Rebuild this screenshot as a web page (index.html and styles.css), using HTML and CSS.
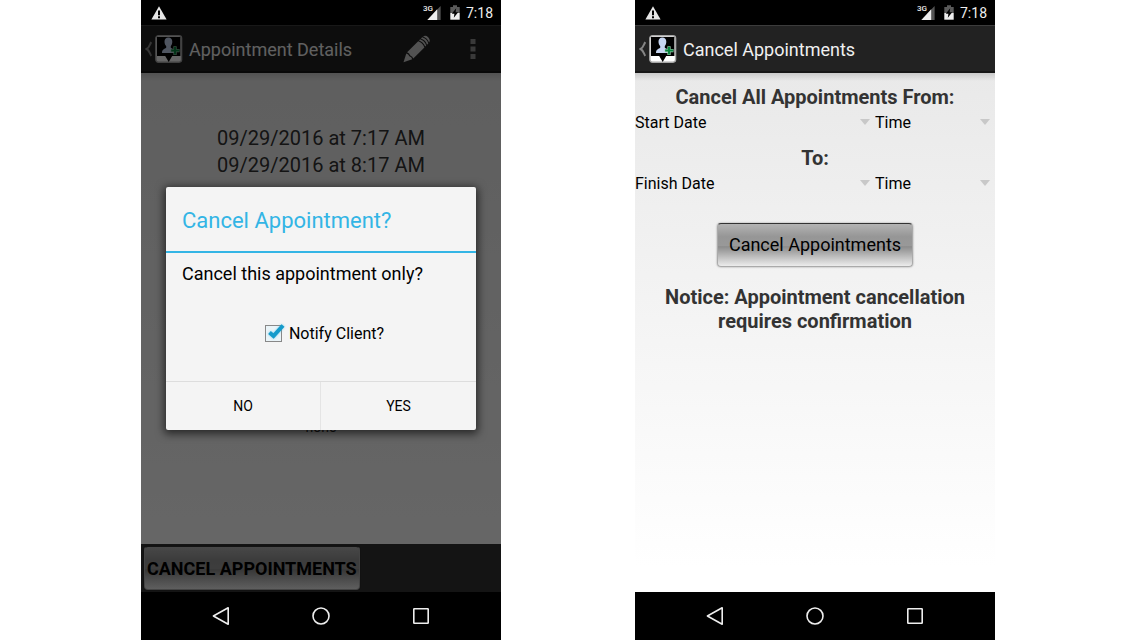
FILE: index.html
```html
<!DOCTYPE html>
<html lang="en">
<head>
<meta charset="utf-8">
<title>Appointments</title>
<link rel="stylesheet" href="styles.css">
</head>
<body>
<svg class="defs" aria-hidden="true">
  <symbol id="warning" viewBox="0 0 16 14">
    <path fill="#e6e6e6" d="M8 0.3 15.6 13.6H0.4Z"/>
    <path fill="#000" d="M7 4.6h2v4.6H7zM7 10.2h2v2H7z"/>
  </symbol>
  <symbol id="signal" viewBox="0 0 14 15">
    <path fill="#555" d="M13.6 1v14H0.4Z"/>
    <path fill="#eee" d="M10.2 4.200V15H0.4Z"/>
  </symbol>
  <symbol id="battery" viewBox="0 0 10 15">
    <path fill="#5a5a5a" d="M0.3 2H3V0.3H7V2h2.7v6H0.3z"/>
    <path fill="#eee" d="M0.3 8h9.4v6.7H0.3z"/>
    <path fill="#000" d="M6.2 3.2 1.8 8.8h2.6L3.8 12.8 8.2 7.2H5.6z"/>
  </symbol>
  <symbol id="chevron" viewBox="0 0 8 16">
    <path fill="none" stroke="#858585" stroke-width="2" d="M6.3 1.2C4.7 3.4 4.6 6.4 1.6 8c3 1.6 3.1 4.6 4.7 6.8"/>
  </symbol>
  <symbol id="app" viewBox="0 0 28 28">
    <rect x="0.8" y="0.8" width="25.8" height="26.4" rx="2.6" fill="#fff" stroke="#a6a6a6" stroke-width="1.4"/>
    <path fill="#000" d="M2 2h23.4v19h-8.2L13.7 27 10.2 21H2z"/>
    <path fill="#c6d5f1" d="M13.3 2.6c2.6 0 4 1.8 4 4.2 0 2-.7 3.2-1.5 4.2v1.8c1.6 1.3 4.6 1.6 4.6 5.2H7c0-3.6 2.5-3.9 4.2-5.2V11C10.2 10 9.5 8.7 9.5 6.8c0-2.4 1.3-4.2 3.8-4.2z"/>
    <path stroke="#9ccfae" stroke-width="3.2" d="M15.7 15.6h8.8M20 11.200v8.800"/>
    <path stroke="#07823d" stroke-width="2" d="M16.2 15.6h7.800M20 11.700v7.800"/>
  </symbol>
  <symbol id="pencil" viewBox="0 0 28 28">
    <g fill="#ccc">
      <path d="M0.500 27.300 3.300 18.600Q5.500 19 6.400 21.300 8.600 22 9.200 24.300Z"/>
      <path d="M4.100 17.200 15.200 6.200Q19.600 7.800 21.400 12.400L10.300 23.400Q9.600 21.200 7.300 20.400 6.400 17.900 4.100 17.200Z"/>
      <path d="M16 5.400 17.100 4.300Q21.600 5.600 23.200 10.500L22.200 11.600Q20.400 7 16 5.400Z"/>
      <path d="M17.900 3.500 19.200 2.200Q24 3.700 25.300 8.400L24 9.700Q22.500 5 17.900 3.500Z"/>
      <path d="M20 1.500Q22.600-.1 25.200 2.300 27.700 5 26.100 7.600 24.400 3 20 1.500Z"/>
    </g>
  </symbol>
  <symbol id="more" viewBox="0 0 6 22">
    <path fill="#909090" d="M.5 1h5v5h-5zM.5 8.500h5v5h-5zM.5 16h5v5h-5z"/>
  </symbol>
  <symbol id="back" viewBox="0 0 20 20">
    <path fill="none" stroke="#eee" stroke-width="1.600" stroke-linejoin="round" d="M17.200 1.800v16.400L2.400 10z"/>
  </symbol>
  <symbol id="home" viewBox="0 0 20 20">
    <circle cx="10" cy="10" r="8" fill="none" stroke="#eee" stroke-width="1.600"/>
  </symbol>
  <symbol id="recent" viewBox="0 0 20 20">
    <rect x="2.800" y="2.800" width="14.400" height="14.400" rx=".5" fill="none" stroke="#eee" stroke-width="1.600"/>
  </symbol>
</svg>

<main class="stage">
  <section class="phone">
    <div class="status-bar">
      <svg class="icon-warning"><use href="#warning"/></svg>
      <div class="status-icons">
        <div class="signal">
          <svg class="icon-signal"><use href="#signal"/></svg>
          <span class="network">3G</span>
        </div>
        <svg class="icon-battery"><use href="#battery"/></svg>
        <time>7:18</time>
      </div>
    </div>
    <div class="screen">
      <header class="action-bar">
        <button class="up" aria-label="Navigate up">
          <svg class="icon-chevron"><use href="#chevron"/></svg>
          <svg class="icon-app"><use href="#app"/></svg>
        </button>
        <h1>Appointment Details</h1>
        <button class="action" aria-label="Edit"><svg class="icon-pencil"><use href="#pencil"/></svg></button>
        <button class="action" aria-label="More options"><svg class="icon-more"><use href="#more"/></svg></button>
      </header>
      <div class="content details">
        <p class="times">09/29/2016 at 7:17 AM<br>09/29/2016 at 8:17 AM</p>
        <p class="notes">none</p>
      </div>
      <footer class="bottom-bar">
        <button class="glossy strong">CANCEL APPOINTMENTS</button>
      </footer>
      <div class="scrim">
        <div class="dialog" role="dialog" aria-labelledby="dialog-title">
          <h2 id="dialog-title">Cancel Appointment?</h2>
          <p class="message">Cancel this appointment only?</p>
          <label class="notify" for="notify">
            <span class="check">
              <input type="checkbox" id="notify" checked>
              <svg class="tick" viewBox="0 0 20 20"><path d="M4.500 9.500 8.500 13 18 2.500"/></svg>
            </span>
            Notify Client?
          </label>
          <div class="dialog-buttons">
            <button>NO</button>
            <button>YES</button>
          </div>
        </div>
      </div>
    </div>
    <nav class="nav-bar">
      <button aria-label="Back"><svg><use href="#back"/></svg></button>
      <button aria-label="Home"><svg><use href="#home"/></svg></button>
      <button aria-label="Recent apps"><svg><use href="#recent"/></svg></button>
    </nav>
  </section>

  <section class="phone">
    <div class="status-bar">
      <svg class="icon-warning"><use href="#warning"/></svg>
      <div class="status-icons">
        <div class="signal">
          <svg class="icon-signal"><use href="#signal"/></svg>
          <span class="network">3G</span>
        </div>
        <svg class="icon-battery"><use href="#battery"/></svg>
        <time>7:18</time>
      </div>
    </div>
    <div class="screen">
      <header class="action-bar">
        <button class="up" aria-label="Navigate up">
          <svg class="icon-chevron"><use href="#chevron"/></svg>
          <svg class="icon-app"><use href="#app"/></svg>
        </button>
        <h1>Cancel Appointments</h1>
      </header>
      <form class="content range">
        <h2>Cancel All Appointments From:</h2>
        <div class="pickers">
          <div class="picker"><select aria-label="Start date"><option>Start Date</option></select></div>
          <div class="picker"><select aria-label="Start time"><option>Time</option></select></div>
        </div>
        <h2>To:</h2>
        <div class="pickers">
          <div class="picker"><select aria-label="Finish date"><option>Finish Date</option></select></div>
          <div class="picker"><select aria-label="Finish time"><option>Time</option></select></div>
        </div>
        <button type="button" class="glossy">Cancel Appointments</button>
        <p class="notice">Notice: Appointment cancellation requires confirmation</p>
      </form>
    </div>
    <nav class="nav-bar">
      <button aria-label="Back"><svg><use href="#back"/></svg></button>
      <button aria-label="Home"><svg><use href="#home"/></svg></button>
      <button aria-label="Recent apps"><svg><use href="#recent"/></svg></button>
    </nav>
  </section>
</main>
</body>
</html>
```
FILE: styles.css
```css
* {
  box-sizing: border-box;
}

body {
  margin: 0;
  background: #fff;
  color: #000;
  font-family: Roboto, "Liberation Sans", sans-serif;
  font-size: 16px;
}

h1, h2, p {
  margin: 0;
}

button {
  margin: 0;
  padding: 0;
  border: 0;
  background: none;
  color: inherit;
  font: inherit;
}

svg {
  display: block;
}

.defs {
  position: absolute;
  width: 0;
  height: 0;
}

.stage {
  display: grid;
  grid-template-columns: 1fr 1fr;
  gap: 134px;
  min-height: 100vh;
  padding: 0 141px;
}

.phone {
  display: flex;
  flex-direction: column;
  min-width: 0;
}

/* System bars */
.status-bar {
  display: flex;
  justify-content: space-between;
  align-items: center;
  height: 25px;
  padding: 0 8px 0 10px;
  background: #000;
  color: #eee;
  font-size: 14px;
}

.status-icons {
  display: flex;
  align-items: center;
}

.icon-warning { width: 16px; height: 14px; }
.icon-signal { width: 14px; height: 15px; }
.icon-battery { width: 10px; height: 15px; margin-right: 6px; }

.signal {
  position: relative;
  margin-right: 9px;
}

.network {
  position: absolute;
  top: 0;
  right: 8px;
  font-size: 8px;
  font-weight: 500;
  line-height: 8px;
}

.nav-bar {
  display: grid;
  grid-template-columns: repeat(3, 1fr);
  height: 48px;
  padding: 0 30px;
  background: #000;
}

.nav-bar button {
  display: grid;
  place-items: center;
}

.nav-bar svg {
  width: 20px;
  height: 20px;
}

/* App screen */
.screen {
  position: relative;
  flex: 1;
  display: flex;
  flex-direction: column;
}

.action-bar {
  display: flex;
  align-items: center;
  height: 48px;
  border-top: 1px solid #3c3c3c;
  border-bottom: 2px solid #161616;
  background: #222;
  color: #f0f0f0;
}

.action-bar h1 {
  flex: 1;
  padding: 2px 0 0 6px;
  font-size: 18px;
  font-weight: 400;
}

.up {
  display: flex;
  align-items: center;
  gap: 2px;
  padding-left: 4px;
}

.icon-chevron { width: 8px; height: 16px; }
.icon-app { width: 28px; height: 28px; }

.action {
  display: grid;
  place-items: center;
  width: 56px;
  height: 45px;
}

.icon-pencil { width: 28px; height: 28px; }
.icon-more { width: 6px; height: 22px; }

.content {
  flex: 1;
  background:
    linear-gradient(#0002, #0000 8px),
    linear-gradient(#e9e9e9, #fff 95%);
  color: #333;
  text-align: center;
}

.details {
  display: flex;
  flex-direction: column;
  gap: 240px;
  padding-top: 52px;
  background:
    linear-gradient(#0002, #0000 8px),
    linear-gradient(#ededed, #fff);
}

.times {
  font-size: 20px;
  line-height: 27px;
}

.notes {
  font-size: 14px;
  line-height: 16px;
}

.bottom-bar {
  display: flex;
  align-items: center;
  height: 48px;
  padding: 0 3px;
  background: #333;
}

.glossy {
  height: 44px;
  padding: 0 11px 1px;
  border: 1px solid #aaa;
  border-top-color: #333;
  border-radius: 4px;
  background: linear-gradient(#b4b4b4, #969696 30%, #999 52%, #8c8c8c 54%, #ececec);
  box-shadow: 0 0 2px #0006;
  color: #000;
  font-size: 18px;
}

.strong {
  padding: 0 2px;
  font-weight: 700;
}

/* Dialog */
.scrim {
  position: absolute;
  inset: 0;
  display: flex;
  align-items: center;
  padding: 0 25px;
  background: rgba(0, 0, 0, 0.6);
}

.dialog {
  flex: 1;
  border-radius: 2px;
  background: #f4f4f4;
  box-shadow: 0 2px 8px 2px rgba(0, 0, 0, 0.6);
}

.dialog h2 {
  padding: 4px 16px 0;
  border-bottom: 2px solid #33b5e5;
  color: #33b5e5;
  font-size: 22px;
  font-weight: 400;
  line-height: 60px;
}

.message {
  padding: 9px 16px 0;
  font-size: 18px;
  line-height: 24px;
}

.notify {
  display: flex;
  align-items: center;
  justify-content: center;
  gap: 4px;
  height: 24px;
  margin: 35px 0 36px;
  padding-left: 7px;
}

.check {
  display: grid;
}

.check > * {
  grid-area: 1 / 1;
}

.check input {
  appearance: none;
  width: 17px;
  height: 17px;
  margin: 2px 3px 1px 0;
  border: 1px solid #888;
  background: #eaf4f8;
}

.tick {
  width: 20px;
  height: 20px;
  fill: none;
  stroke: #149bcb;
  stroke-width: 4;
  filter: drop-shadow(0 0 1px #33b5e599);
  pointer-events: none;
}

.dialog-buttons {
  display: grid;
  grid-template-columns: 1fr 1fr;
  height: 49px;
  border-top: 1px solid #ddd;
  font-size: 14px;
}

.dialog-buttons button:first-child {
  border-right: 1px solid #e4e4e4;
}

/* Date range form */
.range {
  display: flex;
  flex-direction: column;
  align-items: center;
  padding-top: 12px;
}

.range h2,
.notice {
  font-size: 20px;
  font-weight: 700;
  line-height: 24px;
}

.pickers {
  align-self: stretch;
  display: grid;
  grid-template-columns: 2fr 1fr;
  height: 26px;
}

.pickers + h2 {
  margin-top: 11px;
}

.picker {
  display: grid;
  align-items: center;
  padding-right: 5px;
}

.picker > *,
.picker::after {
  grid-area: 1 / 1;
}

.picker::after {
  content: "";
  justify-self: end;
  width: 10px;
  height: 6px;
  background: #c8c8c8;
  clip-path: polygon(0 0, 100% 0, 50% 100%);
  pointer-events: none;
}

.picker select {
  appearance: none;
  width: 100%;
  height: 26px;
  padding: 0;
  border: 0;
  background: none;
  color: #000;
  font: inherit;
}

.range .glossy {
  margin-top: 27px;
}

.notice {
  margin-top: 18px;
  padding: 0 24px;
}
```
